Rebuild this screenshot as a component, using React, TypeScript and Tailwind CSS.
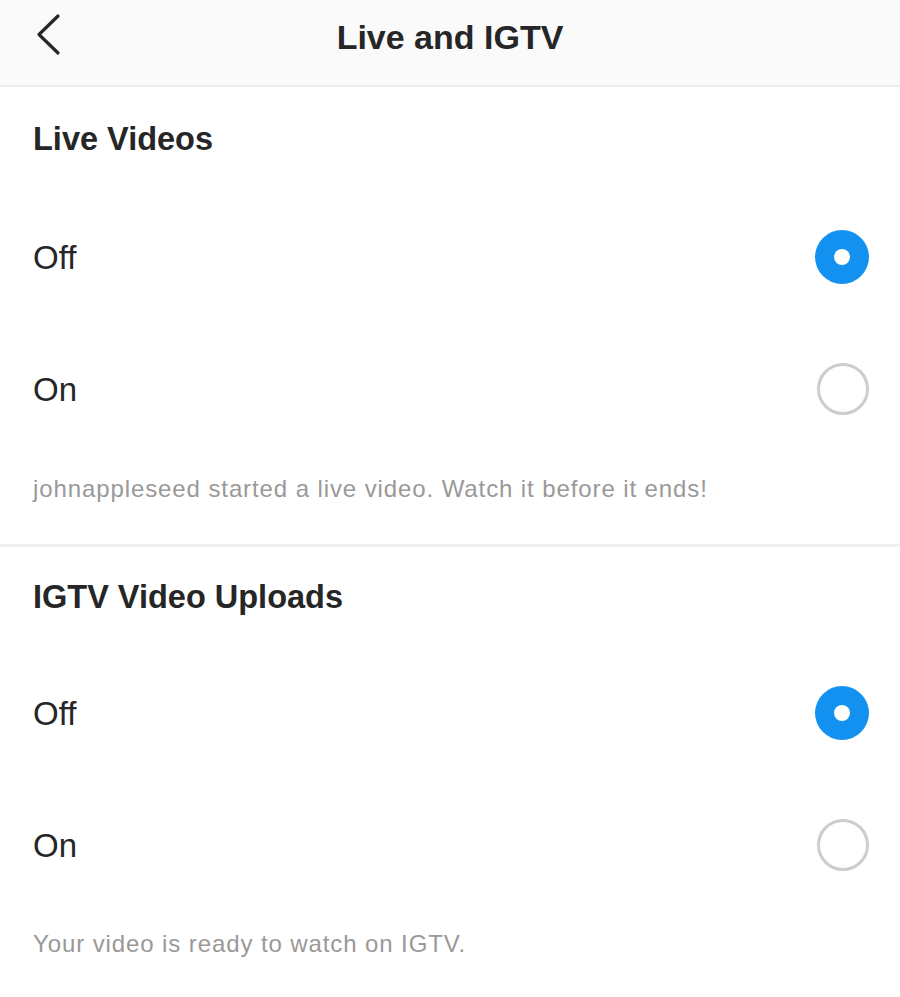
import React from "react";

function Radio({ checked }: { checked: boolean }) {
  return checked ? (
    <div className="w-[54px] h-[54px] rounded-full bg-[#1391f0] flex items-center justify-center">
      <div className="w-[16px] h-[16px] rounded-full bg-white" />
    </div>
  ) : (
    <div className="w-[52px] h-[52px] rounded-full border-[3px] border-[#cdcdcd]" />
  );
}

function Row({ label, checked }: { label: string; checked: boolean }) {
  return (
    <div className="h-[132px] flex items-center justify-between pl-[33px] pr-[31px]">
      <span className="text-[33px] text-[#262626] leading-none">{label}</span>
      <Radio checked={checked} />
    </div>
  );
}

function Section({
  title,
  caption,
  headH,
  capPad,
}: {
  title: string;
  caption: string;
  headH: string;
  capPad: string;
}) {
  return (
    <div>
      <div className={`${headH} flex items-center pl-[33px]`}>
        <span className="text-[32.5px] font-semibold text-[#262626] leading-none">{title}</span>
      </div>
      <Row label="Off" checked={true} />
      <Row label="On" checked={false} />
      <div className={`${capPad} pl-[33px]`}>
        <p className="text-[24px] leading-[30px] tracking-[0.9px] text-[#999999] whitespace-nowrap">
          {caption}
        </p>
      </div>
    </div>
  );
}

export default function App() {
  return (
    <div
      className="w-[900px] h-[997px] bg-white overflow-hidden"
      style={{ fontFamily: '"Liberation Sans", Arial, sans-serif' }}
    >
      <div className="h-[85px] bg-[#fafafa] border-b-[2px] border-[#ececec] relative flex items-center justify-center box-content">
        <svg
          className="absolute left-[34px] top-[13px]"
          width="30"
          height="44"
          viewBox="0 0 30 44"
        >
          <polyline
            points="24,3 5,21.5 24,40"
            fill="none"
            stroke="#262626"
            strokeWidth="3.2"
            strokeLinecap="round"
            strokeLinejoin="round"
          />
        </svg>
        <span className="text-[34px] font-semibold text-[#262626] leading-none -mt-[12px]">
          Live and IGTV
        </span>
      </div>
      <Section
        title="Live Videos"
        caption="johnappleseed started a live video. Watch it before it ends!"
        headH="h-[104px]"
        capPad="h-[89px] pt-[19px]"
      />
      <div className="h-[3px] bg-[#f0f0f0]" />
      <Section
        title="IGTV Video Uploads"
        caption="Your video is ready to watch on IGTV."
        headH="h-[100px]"
        capPad="h-[84px] pt-[18px]"
      />
    </div>
  );
}
